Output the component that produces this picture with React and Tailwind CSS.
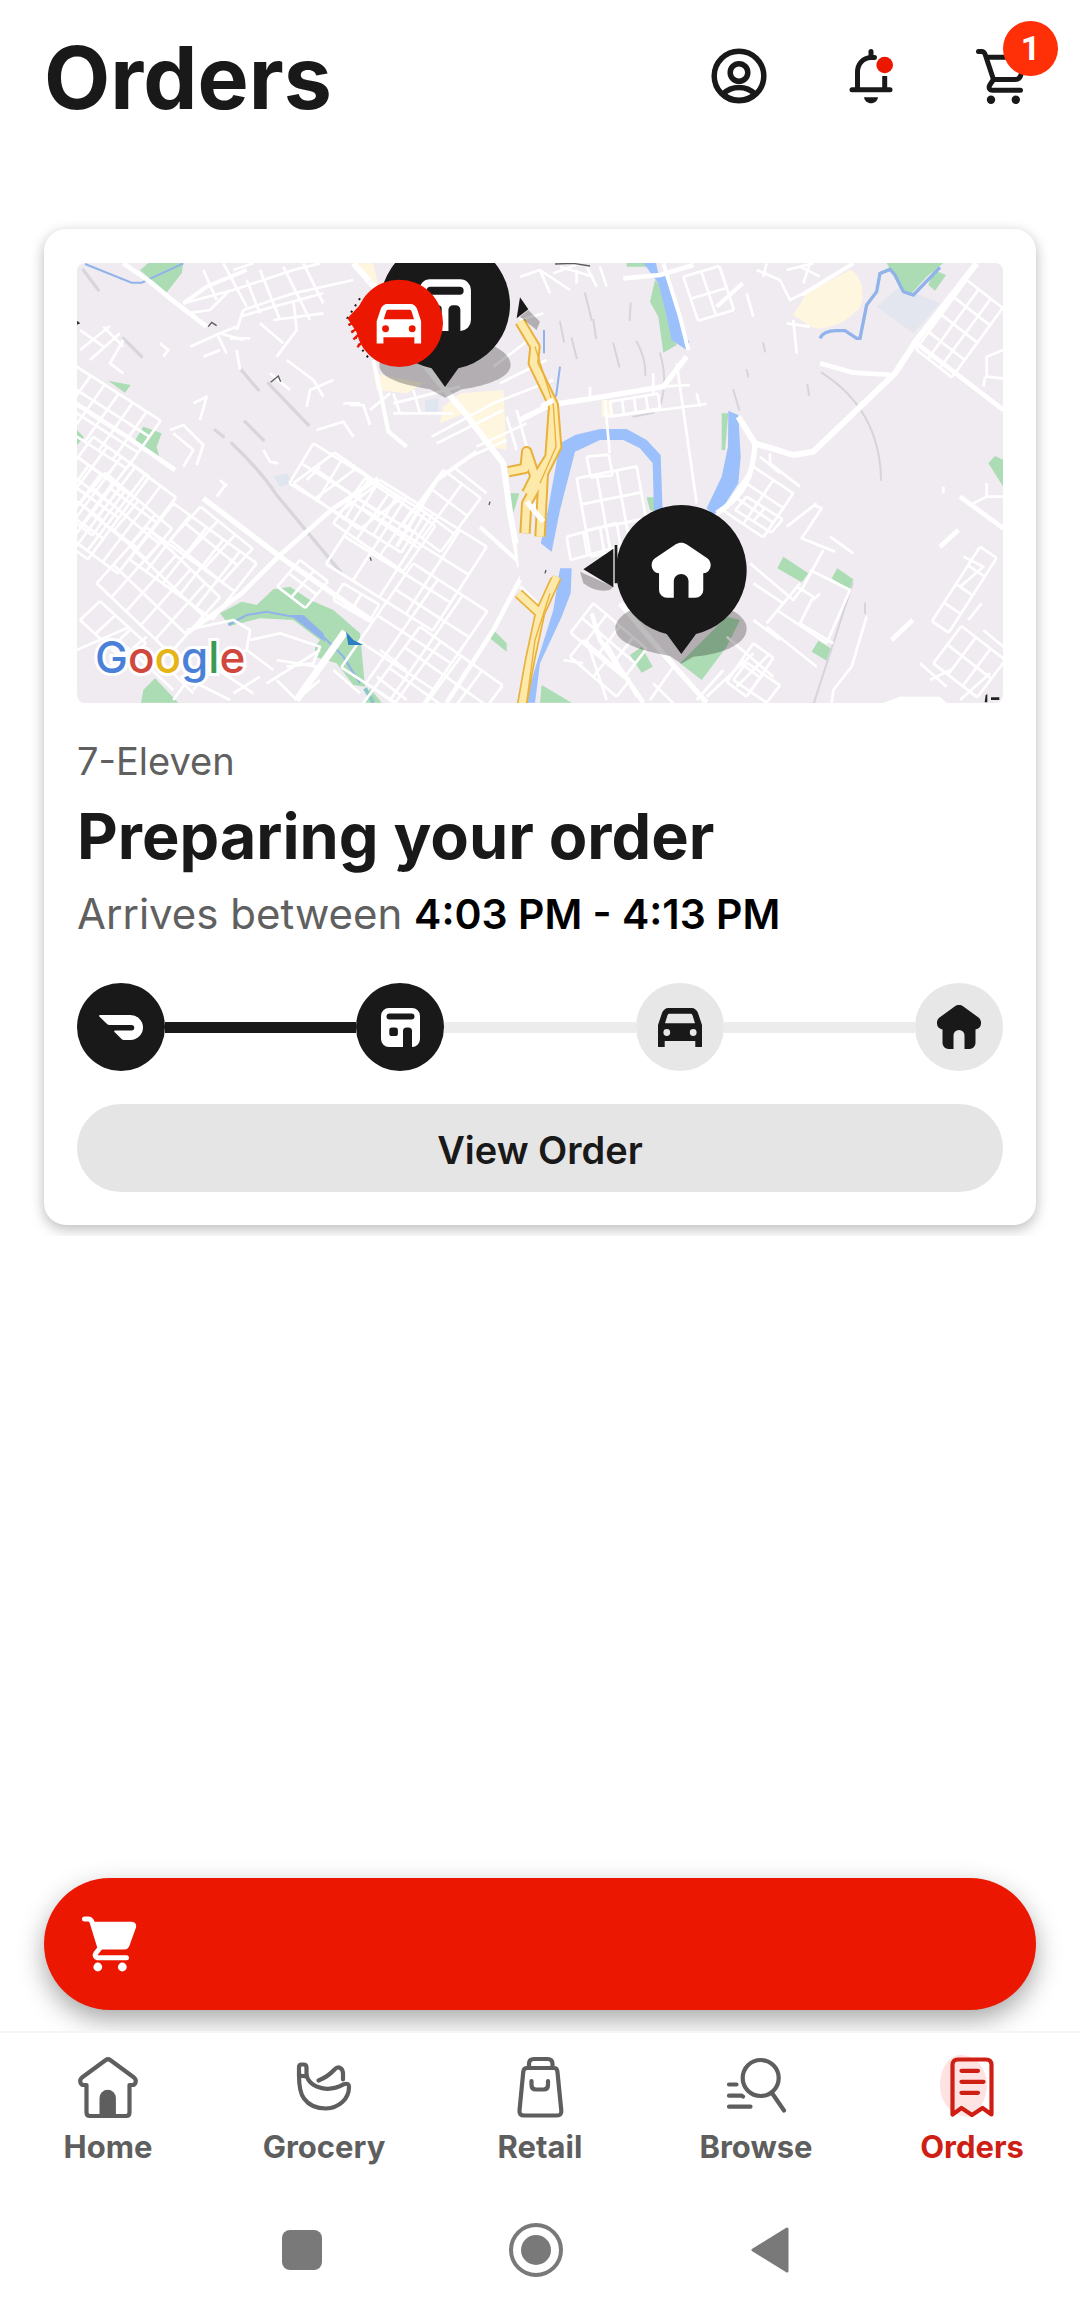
import React from "react";

/* ---------- Icons ---------- */

const ProfileIcon = () => (
  <svg viewBox="0 0 66 66" className="w-full h-full" fill="none" stroke="#191919" strokeWidth="5.5">
    <circle cx="33" cy="33" r="24.8" />
    <circle cx="33" cy="29.5" r="8.8" />
    <path d="M17 51C22 46 27 44.500 33 44.500S44 46 49 51" />
    <path d="M18 52C27 59 39 59 48 52" />
  </svg>
);

const BellIcon = () => (
  <svg viewBox="0 0 66 66" className="w-full h-full" fill="none" stroke="#191919" strokeWidth="5" strokeLinecap="round">
    <path d="M14 46.700H52" />
    <path d="M19.500 46V29C19.500 21 25 14.800 33 14.500L36.500 14.600" />
    <path d="M33 8.500V14" />
    <path d="M46.700 33V46" strokeLinecap="butt" />
    <path d="M26 54.300H40C39.500 58 36.500 60.300 33 60.300S26.500 58 26 54.300Z" fill="#191919" stroke="none" />
    <circle cx="46.700" cy="22" r="8.300" fill="#eb1700" stroke="none" />
  </svg>
);

const CartOutlineIcon = () => (
  <svg viewBox="0 0 66 66" className="w-full h-full" fill="none" stroke="#191919" strokeWidth="5" strokeLinecap="round" strokeLinejoin="round">
    <path d="M8.500 8.500H11.500C13.500 8.500 14.500 9.500 15.200 11.500L23.500 36.500H45C48 36.500 49.500 35.500 50.500 33L57.500 14.200H16.500" />
    <path d="M23.500 36.500L19.800 42C18.300 44.500 19.500 47.200 22.500 47.200H50.500" />
    <circle cx="21" cy="56.800" r="4.200" fill="#191919" stroke="none" />
    <circle cx="45.800" cy="56.800" r="4.200" fill="#191919" stroke="none" />
  </svg>
);

const CartFilledIcon = () => (
  <svg viewBox="0 0 66 66" className="w-full h-full" fill="none" stroke="#fff" strokeWidth="5" strokeLinecap="round" strokeLinejoin="round">
    <path d="M8.500 8H12C14 8 15.300 8.800 16 11L24 37L20 42C18.300 44.500 19.500 46.800 22.500 46.800H50.500" />
    <path d="M16 10.700H55.500C59 10.700 61 13.500 59.800 17L53.500 34.500C52.500 37.200 51 38.500 48.500 38.500H24Z" fill="#fff" stroke="none" />
    <circle cx="21.800" cy="56" r="4.400" fill="#fff" stroke="none" />
    <circle cx="46.300" cy="56" r="4.400" fill="#fff" stroke="none" />
  </svg>
);

const HousePath = () => (
  <path d="M22 0c1.500 0 3 .5 4 1.300L41.500 12.500C43 13.700 44 15.500 44 17.500v1a6 6 0 0 1-5.500 6V38a6 6 0 0 1-6 6H27.500V30.500a5.500 5.500 0 0 0-11 0V44H11.500a6 6 0 0 1-6-6V24.500A6 6 0 0 1 0 18.500v-1C0 15.500 1 13.700 2.500 12.500L18 1.300C19 .5 20.500 0 22 0Z" />
);

const CarPath = () => (
  <path
    fillRule="evenodd"
    d="M0 17L4 5C5 2 7.500 0 10.500 0H33.500C36.500 0 39 2 40 5L44 17V39H37.300V33H6.700V39H0ZM7 15.200H37L34.600 7.500C34.100 6.200 33.500 5.800 32 5.800H12C10.500 5.800 9.900 6.200 9.400 7.500ZM5.400 24.500a3.400 3.400 0 1 0 6.800 0a3.400 3.400 0 1 0-6.800 0ZM31.800 24.500a3.400 3.400 0 1 0 6.800 0a3.400 3.400 0 1 0-6.800 0Z"
  />
);

const StorePath = () => (
  <path
    fillRule="evenodd"
    d="M8 0H31a8 8 0 0 1 8 8V31a8 8 0 0 1-8 8V23a3.500 3.500 0 0 0-3.500-3.500h-2A3.500 3.500 0 0 0 22 23V39H8a8 8 0 0 1-8-8V8A8 8 0 0 1 8 0ZM8.500 5.600a3 3 0 0 0 0 6H30.500a3 3 0 0 0 0-6ZM11 19.500A2.700 2.700 0 0 0 8.300 22.200v3.200A2.700 2.700 0 0 0 11 28.100h3.200A2.700 2.700 0 0 0 16.900 25.400V22.200A2.700 2.700 0 0 0 14.200 19.500Z"
  />
);

const DashPath = () => (
  <path d="M1 0H31.500A12.500 12.500 0 0 1 31.500 25H25c-1 0-2-.4-2.700-1.200L15.500 17c-.7-.7-.3-1.500.6-1.500H32.500a2.700 2.700 0 0 0 0-5.500H10.500c-1 0-2-.4-2.700-1.200L.3 1.600C-.2.800.1 0 1 0Z" />
);

const navSvg = {
  viewBox: "0 0 66 66",
  className: "w-[66px] h-[66px]",
  fill: "none",
  stroke: "currentColor",
  strokeWidth: 4.2,
  strokeLinecap: "round",
  strokeLinejoin: "round",
};

const HomeIcon = () => (
  <svg {...navSvg}>
    <path d="M30.800 6Q33 4.500 35.200 6L59 23.500C62 26 61 31 57 31H54.500V58.500Q54.500 62 51 62H15Q11.500 62 11.500 58.500V31H9C5 31 4 26 7 23.500Z" />
    <path d="M24.500 62V44a8.200 8.200 0 0 1 16.400 0V62Z" fill="currentColor" stroke="none" />
  </svg>
);

const GroceryIcon = () => (
  <svg {...navSvg}>
    <path d="M15.500 20V13.500Q15.500 10.500 12.500 10.500H10.500Q8 10.500 8 13.500V21C8 33 9.500 40 13 44.500C18 51.500 26 54.500 35 54.500C48 54 58 45 58 33Q58 28.500 53 30.200C47 33.500 42 35 36 34.800C26 34.500 16.500 29.500 15.500 20ZM9 21.500L15 22.500" />
    <path d="M27.500 26.500C35 23.500 39 20.500 43.500 15.500C47.500 11.500 51.500 14 52 19V25.500" />
  </svg>
);

const RetailIcon = () => (
  <svg {...navSvg}>
    <path d="M22 14V10Q22 5 27 5H40.500Q45.500 5 45.500 10V14" />
    <path d="M20 14H47Q50 14 50.400 17.500L54.300 56.500Q54.800 61.500 50 61.500H17Q12 61.500 12.500 56.500L16.300 17.500Q16.800 14 20 14Z" />
    <path d="M24.500 27V31Q24.500 35.500 29 35.500H36.500Q41 35.500 41 31V27" />
  </svg>
);

const BrowseIcon = () => (
  <svg {...navSvg}>
    <circle cx="37.700" cy="24" r="18" />
    <path d="M49 39L61 56.500M6 30.500H13.500M6 41.700H18.500L20 42.500M6 52.700H27.500" />
  </svg>
);

const OrdersIcon = () => (
  <svg {...navSvg}>
    <path d="M20 1C32 0 46 8 48 30C48 46 38 62 30 63C12 62 1 48 1 32S8 3 20 1Z" fill="#ffe3e3" stroke="none" />
    <path d="M13.500 60.500V11Q13.500 5.500 19 5.500H47Q52.500 5.500 52.500 11V60.500L43.500 54L33 61L22.500 54Z" />
    <path d="M22.500 16.800H39M22.500 27.800H44.500M22.500 38.800H39" />
  </svg>
);

/* ---------- Map ---------- */

// two sets of parallel streets spanned by the vectors u and v
const grid = (x, y, ux, uy, nu, vx, vy, nv) => {
  let d = "";
  for (let i = 0; i <= nu; i++) {
    d += `M${x + ux * i} ${y + uy * i}l${vx * nv} ${vy * nv}`;
  }
  for (let j = 0; j <= nv; j++) {
    d += `M${x + vx * j} ${y + vy * j}l${ux * nu} ${uy * nu}`;
  }
  return d;
};

const westStreets = [
  grid(50, 350, 42, 27, 6, -34, 48, 3),
  grid(50, 620, 36, 26, 4, -32, 44, 3),
  grid(100, 560, 42, 30, 4, -46, 62, 4),
  grid(210, 640, 46, 34, 3, -58, 76, 3),
  grid(340, 760, 50, 36, 5, -66, 84, 2),
  grid(60, 760, 50, 42, 4, 38, -46, 2),
  grid(110, 1000, 44, 42, 5, 50, -56, 3),
  grid(60, 1110, 46, 42, 3, 60, -56, 1),
  grid(330, 870, 52, 42, 3, 46, -50, 2),
  grid(700, 700, 66, 46, 3, 62, -46, 2),
  grid(760, 580, 84, 52, 4, -36, 60, 2),
  grid(820, 820, 70, 48, 3, 48, -68, 2),
  grid(960, 690, 80, 50, 4, -54, 84, 3),
  grid(1060, 940, 74, 48, 3, -54, 78, 4),
  grid(1150, 660, 56, 42, 2, -40, 54, 3),
  grid(1080, 1130, 62, 44, 4, -46, 62, 4),
  grid(720, 930, 42, 32, 2, -34, 40, 2),
  grid(850, 1000, 54, 32, 2, -30, 50, 1),
  "M150 228L60 300M180 250L90 330M60 240l70 50M130 230l60 60M190 270l-40 70l40 30",
  "M370 160L520 120L700 60L780 40M380 190l70-10l60-60M430 60l40 90M490 40l70 130M560 90l40 100M600 60l60 150M670 50l80 160M730 40l60 120",
  "M550 180L700 130L880 90M540 200L640 170L790 130M550 180l-20 60M640 210l150-20M700 150l10 90l-60 80M600 220l70 60M480 250l70 20M520 60l60-20",
  "M390 290L480 250L530 230M470 250l30 60M510 265h60M530 300l10 60M430 320l50-20M300 280l25 20l-15 20M680 330l80 60l30 50M630 370l60 50M740 470l10-50l70-30",
  "M770 540L850 515L880 560M870 465l40 0l20 60M850 460h50M930 480l60 -50M1000 490h180M1000 430l20 60M1060 420l20 70M1115 560L1300 460L1480 390M1130 580L1330 480M1000 460l200-50",
  "M1300 350L1420 260M1320 400L1460 330M1340 500l30 100M1370 480l30 110M1250 590L1400 520M1230 620l110-50M1180 650l100 80M1350 140l-40 80M1380 210l70-20",
  "M330 540l40-15l60 60l-20 60M340 550l60 50l-30 50M400 460l40-20l-20 70M610 600l20 35l25 5M470 740l30-40M480 690l20 20M740 690l40-40",
  "M380 1140l140-30l50 30l-10 60l-100 40l-60 80M570 1170l90-20l120 40l-20 50l-80 10M460 1250l120 80M620 1300l160-100M560 1200l80 60M650 1230l120 20M200 1190l140 130M50 1200l160-70M140 1260l120-100M300 1230l100 100M520 1330l80-50",
  "M390 1290l120 60M420 1240l-80 110M650 1290l60 60M780 1290l-70 60M820 1260l80 70M960 1200l80 60M950 1280l90 70",
];

const westRoads = [
  ["M190 40L270 95L330 145L440 230", 14],
  ["M50 462L200 560L345 660", 14],
  ["M430 745L660 920L940 1115", 16],
  ["M955 685L820 775L660 915L545 1030L380 1150", 14],
  ["M880 40L960 130L1080 330L1215 490L1330 640L1350 790L1380 950", 18],
  ["M940 330L960 420L985 545L1040 590", 12],
  ["M855 1145L710 1350", 22],
  ["M1390 970L1300 1140L1160 1358", 14],
  ["M1010 890L1070 790L1130 690L1250 605", 12],
  ["M370 160L440 110L560 60", 12],
  ["M1260 830L1370 930M1380 1010L1430 1060", 12],
];

const eastStreets = [
  grid(170, 685, 60, -12, 3, 14, 78, 3),
  grid(140, 860, 50, -14, 3, 12, 70, 1),
  grid(200, 620, 66, -6, 1, 12, 62, 1),
  grid(1340, 90, 36, 28, 3, -38, 52, 4),
  grid(680, 740, 54, 34, 2, -34, 40, 1),
  grid(700, 650, 60, 40, 2, -30, 44, 3),
  grid(270, 455, 36, -6, 4, 6, 44, 1),
  grid(490, 80, 54, -16, 2, 22, 66, 2),
  grid(1380, 890, 50, 34, 1, -36, 56, 4),
  grid(1240, 1240, 44, 34, 3, 42, -56, 2),
  grid(700, 1180, 60, 44, 1, -40, 58, 2),
  grid(640, 1290, 50, 34, 2, 40, -52, 1),
  grid(220, 1060, 40, 34, 4, -34, 44, 2),
  grid(150, 1220, 40, -50, 1, 70, 60, 2),
  "M0 80l60-20l90 60M60 60l30 70M120 50l100 30M100 70l80-30M170 60v40M200 50l30 60M240 50l20 60",
  "M255 450l14 160M265 500L560 462M250 490L270 500M470 340l60 420M400 370v60M210 410v30M530 430l10 40M420 410L510 405",
  "M680 130l20 70M710 60l70 30M780 90l30 60l40-20M820 210l10 100M800 220l70 10M740 40l-10 40M800 60l80-20M870 40l-20 60M900 80l-60-30",
  "M750 610v30l90 70M720 620l60 50M880 765l25 10l-60 90l100 40M800 830L890 760M930 860l70 50M910 900l-60 110L820 1050L690 940M840 1000l-100 120M700 1000l90 60M830 1010l50 30l-40 80l100 60",
  "M880 1050l20-20M870 960l120 60l-70 160M770 1080l150 100M700 1110l80 60M740 1130l150 120M620 1160l140 120M650 1310l100-100M560 1340l140-130",
  "M1450 300l-50 20v60l50 5M1395 380l-5 30M1400 700v40l-40 20M1400 740h50M1270 730v-20M1330 920l60 30l-70 60M1390 1140l60 50M1345 1110l40-50M1200 1240l80 70M1320 1350l90-80M1230 1290l60-30",
  "M1040 1100l-45 150l-55 70l-5 40M530 1350l80-90M200 1170l60 180M260 1180l90 160M130 1230l60 10M400 1300l60 60M460 1250l-70 100",
];

const eastRoads = [
  ["M0 510L90 465L250 440L430 410L500 320", 16],
  ["M430 40L480 200L505 300", 12],
  ["M310 85L420 75L520 45", 14],
  ["M1370 40L1190 270L1125 370L880 605L820 615L705 580L655 500", 18],
  ["M705 580C700 680 670 740 590 790", 16],
  ["M1190 280L1450 480", 14],
  ["M900 340L1000 368L1120 375", 14],
  ["M215 1090L240 1170L370 1358", 14],
  ["M300 1060L420 1200L560 1358", 16],
  ["M1320 740L1450 835M1260 890L1315 840M1115 1170L1178 1110", 14],
  ["M590 170L668 100", 12],
  ["M845 135L1000 40", 12],
  ["M20 740L70 815", 18],
];

const Road = ({ d, width = 8 }) => (
  <path d={d} fill="none" stroke="#fff" strokeWidth={width} strokeLinejoin="round" />
);

const HIGHWAY =
  "M1380 215L1425 290L1420 340L1480 465L1490 590L1450 670L1400 760L1395 850M1450 670L1440 860M1345 665L1395 655L1400 605L1425 680L1400 730M1480 480L1470 620L1420 700";
const HIGHWAY_SOUTH = "M1490 980L1440 1090L1410 1230L1385 1370M1375 1030L1440 1090";

const DeliveryMap = () => (
  <svg
    viewBox="51 39 2778 1320"
    preserveAspectRatio="xMidYMid slice"
    role="img"
    aria-label="Map of the delivery route"
    className="block w-full h-full"
  >
    <rect x="51" y="39" width="2778" height="1320" fill="#f0ebf0" />

    {/* Business areas */}
    <g fill="#fff6e0">
      <path d="M1200 430L1330 420L1340 600L1290 590L1215 490L1140 520L1150 470Z" />
      <path d="M880 40H940L960 130L920 100Z" />
      <path d="M940 370L1090 400L1040 430L950 420Z" />
      <path d="M2370 60C2400 70 2420 130 2400 170C2370 210 2310 240 2260 235L2200 195L2240 130Z" />
      <path d="M1625 450H1655V500H1625Z" />
    </g>
    <path d="M2450 170L2520 110L2640 160L2560 250Z" fill="#e3e6ef" />
    <path d="M640 680l40-10l20 30l-40 10ZM1095 450l40-5v40h-40Z" fill="#e0e6f0" />

    {/* Parks */}
    <g fill="#abdcb4">
      <path d="M265 39H370L365 70L318 130L240 60Z" />
      <path d="M145 392L212 405L195 428Z" />
      <path d="M250 530L305 550L290 590L300 628L220 580Z" />
      <path d="M51 540L72 562L51 585Z" />
      <path d="M480 1090L545 1055L590 1065L640 1018L690 1010L750 1050L820 1080L900 1150L915 1310L880 1305L830 1240L765 1220V1190L780 1170L700 1110L600 1105L510 1128Z" />
      <path d="M285 1285L355 1358H243L250 1320Z" />
      <path d="M1300 1140L1340 1180V1205L1290 1165Z" />
      <path d="M1350 730H1378L1360 790Z" />
      <path d="M1700 39H1760V50H1700Z" />
      <path d="M2480 39H2650L2600 80L2555 130L2520 115Z" />
      <path d="M2620 60L2658 75L2625 122L2605 105Z" />
      <path d="M1805 110L1850 285L1810 308L1795 200L1770 155L1785 90Z" />
      <path d="M1985 490V600L1995 600L2005 490Z" />
      <path d="M1760 742H1790L1800 790L1770 780Z" />
      <path d="M2785 640L2805 618L2830 630V710Z" />
      <path d="M2170 920L2245 970L2225 997L2152 955Z" />
      <path d="M2332 955L2380 988L2370 1022L2315 985Z" />
      <path d="M2275 1172L2312 1195L2300 1232L2255 1205Z" />
      <path d="M1710 1215L1745 1190L1778 1250L1745 1268Z" />
      <path d="M1860 1240L2000 1100L2040 1110L2000 1190L1925 1290Z" />
      <path d="M1445 1305L1535 1358H1440Z" />
      <path d="M930 1315L965 1358H915Z" />
    </g>

    {/* Railways */}
    <g fill="none" stroke="#d9d5dc" strokeWidth="10" strokeLinecap="round">
      <path d="M515 580Q600 660 650 735L845 970" />
      <path d="M540 355L595 420M625 400L745 525M555 515L610 570" />
      <path d="M70 60L115 120M190 265L245 320M465 540L490 560" />
    </g>
    <g fill="none" stroke="#d6d4da" strokeWidth="6" strokeLinecap="round">
      <path d="M1575 130l20 80M1500 215l12 60M1535 265l15 60M1660 280l18 70M1600 210l8 55M1730 275q28 50 26 100M1800 310q25 80 0 160M1712 160l-3 50" />
      <path d="M2020 420l18 60M2110 280l5 25M2242 405l5 30M2060 360l5 20M2285 368Q2460 480 2463 690" />
      <path d="M2378 1000L2262 1358M2415 1060v30M1720 500l60-12" />
    </g>

    {/* Water */}
    <g fill="none" stroke="#8fb3ea" strokeWidth="6">
      <path d="M75 42L215 98H245L370 40" />
      <path d="M505 1125L560 1095L620 1085L700 1100" />
      <path d="M790 1160L850 1220L900 1300" />
      <path d="M1452 240V310M1500 350L1488 440" />
      <path d="M2280 265Q2290 242 2330 242H2355L2390 265L2400 265L2420 165L2450 125L2460 70L2490 58L2505 75L2530 125L2560 135L2640 52" strokeWidth="10" />
    </g>
    <path d="M690 1095H730L790 1150L795 1175L760 1150Z" fill="#8fb3ea" />
    <path d="M915 1315L940 1358" stroke="#8cc5c4" strokeWidth="12" />
    <g fill="#9cc0fb">
      <path d="M1750 39H1788L1795 70L1820 80L1850 180L1865 240L1888 275L1880 300L1835 270L1818 190L1795 100Z" />
      <path d="M2005 482L2035 495L2042 620L2035 700L1990 770L1960 795L1940 775L1985 680L2004 590Z" />
      <path d="M1500 580L1545 555L1620 537H1700L1760 570L1802 615L1808 790H1782L1778 640L1740 595L1690 570H1620L1545 605L1500 780L1475 905L1440 890L1460 800Z" />
      <path d="M1500 955H1535L1532 1030L1505 1100L1440 1240L1425 1358H1395L1430 1240L1480 1080Z" />
    </g>

    {/* Streets */}
    {westStreets.map((d) => (
      <Road key={d} d={d} />
    ))}
    {westRoads.map(([d, width]) => (
      <Road key={d} d={d} width={width} />
    ))}
    <g transform="translate(1380 0)">
      {eastStreets.map((d) => (
        <Road key={d} d={d} />
      ))}
      {eastRoads.map(([d, width]) => (
        <Road key={d} d={d} width={width} />
      ))}
    </g>
    <path d="M858 1145L880 1170L910 1185H865Z" fill="#2f7fc4" />

    {/* Highway */}
    <g fill="none" strokeLinejoin="round">
      <path d={HIGHWAY} stroke="#e9b13c" strokeWidth="34" />
      <path d={HIGHWAY} stroke="#fde9a9" strokeWidth="22" />
      <path d={HIGHWAY_SOUTH} stroke="#e9b13c" strokeWidth="32" />
      <path d={HIGHWAY_SOUTH} stroke="#fde9a9" strokeWidth="22" />
      <path d="M1425 290L1480 465L1488 590L1440 700M1470 1030L1425 1170L1400 1358" stroke="#e9b13c" strokeWidth="4" />
    </g>
    <path d="M1370 880L1430 870L1480 910L1500 960L1440 1010L1380 990Z" fill="#f0ebf0" />
    <path d="M1400 755L1450 815M1480 450L1445 470" stroke="#fff" strokeWidth="16" />

    {/* Direction marks */}
    <g fill="none" stroke="#5c5c5c" strokeWidth="4">
      <path d="M445 230L455 217L470 227M632 397L655 378L662 395M1485 42L1540 40L1590 48" />
      <path d="M930 922l4 10M1290 755l-3 10M1458 960l-3 10" />
    </g>
    <path d="M51 212l10 8l-10 4Z" fill="#333" />

    {/* Store pin */}
    <path d="M958 345a197 85 0 0 1 394 0C1352 385 1270 410 1205 418L1155 443L1110 418C1030 405 958 385 958 345Z" fill="#000" fillOpacity="0.26" />
    <path d="M1380 200L1405 180L1440 215L1430 240Z" fill="#000" fillOpacity="0.26" />
    <path d="M1380 142L1405 178L1370 205Z" fill="#191919" />
    <path d="M1115 355A195 195 0 1 1 1195 355L1155 411Z" fill="#191919" />
    <g fill="#fff" transform="translate(1078 88) scale(3.97)">
      <StorePath />
    </g>

    {/* Dasher pin */}
    <path d="M900 145L862 205L880 250L900 290L930 330" fill="none" stroke="#191919" strokeWidth="6" strokeDasharray="6 16" />
    <path d="M900 165L862 205L892 250Z" fill="#eb1700" />
    <path d="M888 215L865 225M890 235L874 248M895 255L880 268M903 280L892 292" stroke="#eb1700" strokeWidth="7" />
    <circle cx="1018" cy="220" r="131" fill="#eb1700" />
    <g fill="#fff" transform="translate(950 162) scale(3.03)">
      <CarPath />
    </g>

    {/* Home pin */}
    <g transform="translate(1380 0)">
      <path d="M180 965L280 1010L270 1020Q230 1030 190 1000Z" fill="#000" fillOpacity="0.26" />
      <path d="M190 958L280 896V1012ZM284 885H292V1000H284Z" fill="#191919" />
      <path d="M286 1135a197 85 0 0 1 394 0C680 1190 590 1215 520 1220L484 1241L450 1218C370 1205 286 1180 286 1135Z" fill="#000" fillOpacity="0.26" />
      <path d="M440 1152A196 196 0 1 1 528 1152L484 1212Z" fill="#191919" />
      <g fill="#fff" transform="translate(395 878) scale(4.02 3.75)">
        <HousePath />
      </g>
    </g>

    {/* Attribution corner */}
    <path d="M2470 1359L2520 1340H2640L2660 1359Z" fill="#fff" />
    <path d="M2777 1335l5-2v24h-8ZM2793 1342h25v8h-25Z" fill="#222" />
  </svg>
);

const GoogleMark = () => (
  <span className="absolute left-[18px] bottom-[14px] text-[44px] leading-[64px] font-medium [-webkit-text-stroke:6px_#fff] [paint-order:stroke_fill]">
    <span className="text-[#4a80d8]">G</span>
    <span className="text-[#d0473e]">o</span>
    <span className="text-[#e5b517]">o</span>
    <span className="text-[#4a80d8]">g</span>
    <span className="text-[#3c9a52]">l</span>
    <span className="text-[#d0473e]">e</span>
  </span>
);

/* ---------- Order card ---------- */

const steps = [
  { label: "Order placed", viewBox: "0 0 44 25", size: "w-[44px] h-[25px]", Shape: DashPath, done: true },
  { label: "Preparing", viewBox: "0 0 39 39", size: "w-[39px] h-[39px]", Shape: StorePath, done: true },
  { label: "On the way", viewBox: "0 0 44 39", size: "w-[44px] h-[39px]", Shape: CarPath, done: false },
  { label: "Delivered", viewBox: "0 0 44 44", size: "w-[44px] h-[44px]", Shape: HousePath, done: false },
];

const OrderProgress = () => (
  <ol className="mt-[41px] flex items-center">
    {steps.map(({ label, viewBox, size, Shape, done }, index) => (
      <React.Fragment key={label}>
        {index > 0 && (
          <li aria-hidden="true" className={`flex-1 h-[11px] ${done ? "bg-[#191919]" : "bg-[#ececec]"}`} />
        )}
        <li
          aria-label={label}
          className={`w-[88px] h-[88px] shrink-0 rounded-full flex items-center justify-center ${
            done ? "bg-[#191919] text-white" : "bg-[#e7e7e7] text-[#191919]"
          }`}
        >
          <svg viewBox={viewBox} className={size} fill="currentColor">
            <Shape />
          </svg>
        </li>
      </React.Fragment>
    ))}
  </ol>
);

const OrderCard = () => (
  <article className="bg-white rounded-[22px] px-[33px] pt-[34px] pb-[33px] shadow-[0_4px_14px_rgba(0,0,0,0.28)]">
    <div className="relative h-[440px] rounded-lg overflow-hidden">
      <DeliveryMap />
      <GoogleMark />
    </div>

    <p className="mt-[30px] text-[38px] leading-[56px] text-[#606060]">7-Eleven</p>
    <h2 className="mt-[7px] text-[63px] leading-[80px] font-bold text-[#191919]">
      Preparing your order
    </h2>
    <p className="mt-[10px] text-[42px] leading-[56px] text-[#606060]">
      Arrives between <b className="text-[41px] font-semibold text-black">4:03 PM - 4:13 PM</b>
    </p>

    <OrderProgress />

    <button className="mt-[33px] w-full h-[88px] pt-1 rounded-full bg-[#e5e5e5] text-[38px] font-semibold text-[#191919]">
      View Order
    </button>
  </article>
);

/* ---------- Navigation ---------- */

const tabs = [
  { name: "Home", Icon: HomeIcon },
  { name: "Grocery", Icon: GroceryIcon },
  { name: "Retail", Icon: RetailIcon },
  { name: "Browse", Icon: BrowseIcon },
  { name: "Orders", Icon: OrdersIcon },
];

const TabBar = ({ active }) => (
  <nav className="border-t-2 border-[#f5f5f5] bg-white pt-[21px] pb-[17px] grid grid-cols-5">
    {tabs.map(({ name, Icon }) => (
      <a
        key={name}
        href="#"
        aria-current={name === active ? "page" : undefined}
        className={`flex flex-col items-center gap-[7px] text-[31px] leading-[40px] font-bold ${
          name === active ? "text-[#cf1f14]" : "text-[#5e5e5e]"
        }`}
      >
        <Icon />
        {name}
      </a>
    ))}
  </nav>
);

const SystemBar = () => (
  <div className="h-[132px] bg-white pr-2 flex items-center justify-center gap-[178px]">
    <button aria-label="Recent apps" className="w-14 h-14 flex items-center justify-center">
      <span className="w-10 h-10 rounded-lg bg-[#797979]" />
    </button>
    <button aria-label="Home screen" className="w-14 h-14 flex items-center justify-center">
      <span className="w-[54px] h-[54px] rounded-full border-4 border-[#797979] flex items-center justify-center">
        <span className="w-[30px] h-[30px] rounded-full bg-[#797979]" />
      </span>
    </button>
    <button aria-label="Back" className="w-14 h-14 flex items-center justify-center">
      <svg viewBox="0 0 38 46" className="w-[38px] h-[46px]" fill="#797979" stroke="#797979" strokeWidth="3" strokeLinejoin="round">
        <path d="M2 23L36 2V44Z" />
      </svg>
    </button>
  </div>
);

const App = () => {
  const cartCount = 1;

  return (
    <div className="min-h-screen flex flex-col bg-white font-[Inter,sans-serif]">
      {/* Header */}
      <header className="px-[44px] py-[43px] flex items-center justify-between">
        <h1 className="pt-1 text-[86px] leading-[62px] font-bold text-[#191919]">Orders</h1>
        <div className="flex gap-[66px]">
          <button aria-label="Account" className="w-[66px] h-[66px]">
            <ProfileIcon />
          </button>
          <button aria-label="Notifications" className="w-[66px] h-[66px]">
            <BellIcon />
          </button>
          <button aria-label="Cart" className="relative w-[66px] h-[66px]">
            <CartOutlineIcon />
            <span className="absolute -top-[22px] -right-[22px] w-[55px] h-[55px] rounded-full bg-[#ff3008] text-white text-[34px] font-bold font-[Roboto,sans-serif] flex items-center justify-center">
              {cartCount}
            </span>
          </button>
        </div>
      </header>

      {/* Current order */}
      <main className="flex-1">
        <div className="px-[44px] pt-[77px] pb-[11px] overflow-hidden">
          <OrderCard />
        </div>
      </main>

      {/* Cart bar */}
      <div className="px-[44px] pt-8 pb-[21px] overflow-hidden">
        <button
          aria-label="View cart"
          className="w-full h-[132px] rounded-full bg-[#eb1700] px-8 flex items-center shadow-[0_10px_26px_rgba(0,0,0,0.35)]"
        >
          <span className="w-[66px] h-[66px]">
            <CartFilledIcon />
          </span>
        </button>
      </div>

      <TabBar active="Orders" />
      <SystemBar />
    </div>
  );
};

export default App;
